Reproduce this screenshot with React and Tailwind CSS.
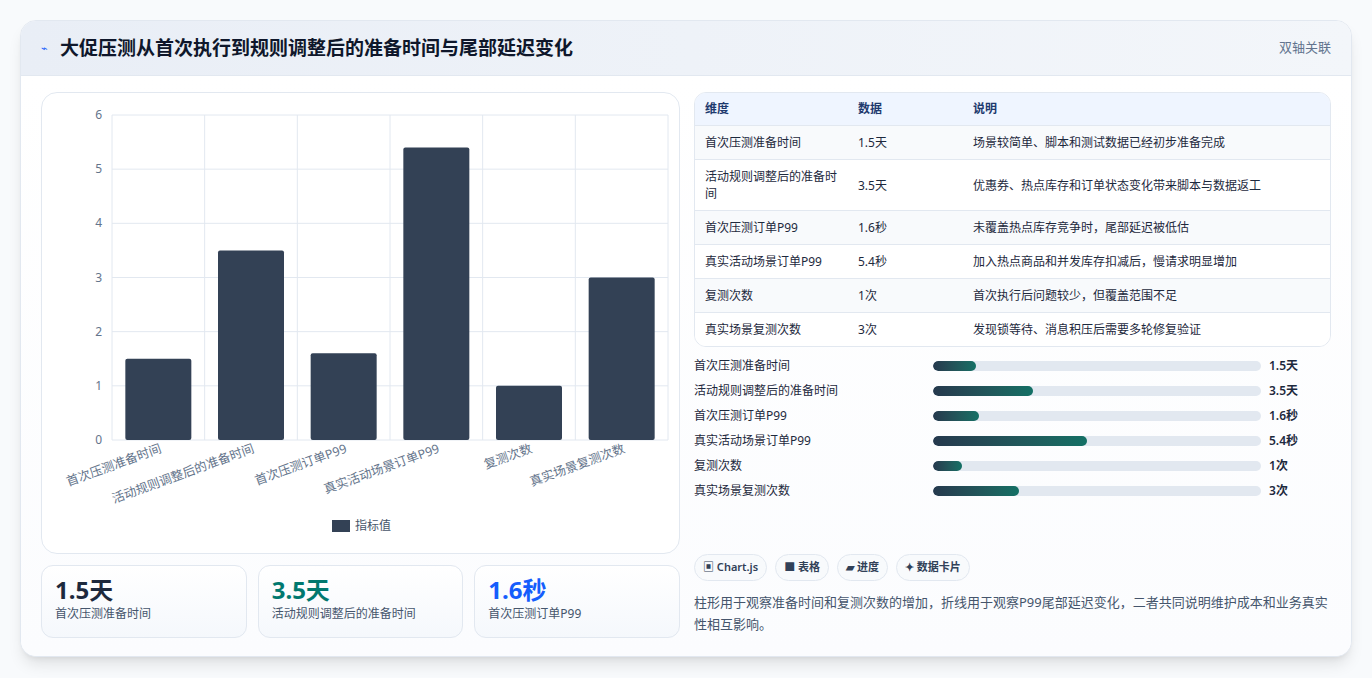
const DATA = [
  { name: '首次压测准备时间', v: 1.5, unit: '天', note: '场景较简单、脚本和测试数据已经初步准备完成' },
  { name: '活动规则调整后的准备时间', v: 3.5, unit: '天', note: '优惠券、热点库存和订单状态变化带来脚本与数据返工' },
  { name: '首次压测订单P99', v: 1.6, unit: '秒', note: '未覆盖热点库存竞争时，尾部延迟被低估' },
  { name: '真实活动场景订单P99', v: 5.4, unit: '秒', note: '加入热点商品和并发库存扣减后，慢请求明显增加' },
  { name: '复测次数', v: 1, unit: '次', note: '首次执行后问题较少，但覆盖范围不足' },
  { name: '真实场景复测次数', v: 3, unit: '次', note: '发现锁等待、消息积压后需要多轮修复验证' },
]

const FONT = { fontFamily: '"Noto Sans", "Noto Sans CJK SC", sans-serif' }

function BarChart() {
  const L = 70, R = 626, T = 22, B = 347
  const band = (R - L) / 6
  const y = (v) => B - (v / 6) * (B - T)
  return (
    <svg width="639" height="460" className="block">
      {[0, 1, 2, 3, 4, 5, 6].map((t) => (
        <g key={t}>
          <line x1={L} x2={R} y1={y(t)} y2={y(t)} stroke="#e2e8f0" />
          <text x={L - 10} y={y(t) + 4} textAnchor="end" fontSize="12" fill="#64748b">{t}</text>
        </g>
      ))}
      {[0, 1, 2, 3, 4, 5, 6].map((i) => (
        <line key={i} x1={L + band * i} x2={L + band * i} y1={T} y2={B} stroke="#e2e8f0" />
      ))}
      {DATA.map((d, i) => {
        const cx = L + band * i + band / 2
        return (
          <g key={d.name}>
            <rect x={cx - 33} y={y(d.v)} width="66" height={B - y(d.v)} rx="2" fill="#334155" />
            <text transform={`translate(${cx + 4},${B + 12}) rotate(-20)`} textAnchor="end" fontSize="12.5" fill="#64748b">{d.name}</text>
          </g>
        )
      })}
      <rect x="290" y="427" width="18" height="12" fill="#334155" />
      <text x="313" y="437" fontSize="12" fill="#475569">指标值</text>
    </svg>
  )
}

export default function App() {
  return (
    <div className="min-h-screen bg-[#f8fafc] p-5" style={FONT}>
      <div className="rounded-2xl border border-slate-200 bg-white shadow-lg overflow-hidden">
        <div className="flex items-center justify-between h-[55px] px-5 bg-gradient-to-r from-[#e9eef6] to-[#f3f6fa] border-b border-slate-200">
          <div className="flex items-center gap-3">
            <span className="text-[11px] text-blue-600">⌁</span>
            <h1 className="text-[19px] font-bold text-slate-900">大促压测从首次执行到规则调整后的准备时间与尾部延迟变化</h1>
          </div>
          <span className="text-[13px] text-slate-500">双轴关联</span>
        </div>
        <div className="flex gap-[14px] px-5 pt-4 pb-[18px] bg-gradient-to-b from-white to-[#fbfcfe]">
          <div className="w-[639px] flex flex-col gap-[11px]">
            <div className="rounded-2xl border border-slate-200 bg-white">
              <BarChart />
            </div>
            <div className="grid grid-cols-3 gap-[11px]">
              {[
                ['1.5天', 'text-slate-800', '首次压测准备时间'],
                ['3.5天', 'text-teal-700', '活动规则调整后的准备时间'],
                ['1.6秒', 'text-blue-600', '首次压测订单P99'],
              ].map(([v, c, l]) => (
                <div key={l} className="h-[73px] rounded-xl border border-slate-200 bg-gradient-to-b from-white to-[#f5f8fc] px-[13px] pt-[8px]">
                  <div className={`text-[24px] font-bold leading-8 ${c}`}>{v}</div>
                  <div className="text-[12px] text-slate-600 leading-4">{l}</div>
                </div>
              ))}
            </div>
          </div>
          <div className="flex-1 flex flex-col">
            <div className="rounded-xl border border-slate-200 overflow-hidden text-[12px] text-slate-800">
              <div className="flex h-[32px] items-center bg-[#eff5ff] text-[#1e3a6e] font-semibold px-[10px]">
                <div className="w-[153px]">维度</div>
                <div className="w-[115px]">数据</div>
                <div>说明</div>
              </div>
              {DATA.map((d, i) => (
                <div key={d.name} className={`flex items-center px-[10px] py-[8px] border-t border-slate-200 ${i % 2 ? 'bg-white' : 'bg-[#f8fafc]'}`}>
                  <div className="w-[153px] pr-3 leading-[17px]">{d.name}</div>
                  <div className="w-[115px] leading-[17px]">{d.v}{d.unit}</div>
                  <div className="leading-[17px]">{d.note}</div>
                </div>
              ))}
            </div>
            <div className="flex flex-col gap-[9px] mt-[11px]">
              {DATA.map((d) => (
                <div key={d.name} className="flex items-center h-4 text-[12px] text-slate-800">
                  <div className="w-[239px]">{d.name}</div>
                  <div className="w-[328px] h-[10px] rounded-full bg-slate-200 overflow-hidden">
                    <div className="h-full rounded-full bg-gradient-to-r from-[#25394d] to-[#137065]" style={{ width: `${(d.v / 11.5) * 100}%` }} />
                  </div>
                  <div className="ml-2 font-semibold">{d.v}{d.unit}</div>
                </div>
              ))}
            </div>
            <div className="flex gap-2 mt-[55px] text-[11px] font-semibold text-slate-700">
              {['▣ Chart.js', '■ 表格', '▰ 进度', '✦ 数据卡片'].map((c) => (
                <span key={c} className="rounded-full border border-slate-200 bg-[#f8fafc] px-2 h-[27px] flex items-center">{c}</span>
              ))}
            </div>
            <p className="mt-[10px] text-[13px] leading-[22px] text-slate-600">柱形用于观察准备时间和复测次数的增加，折线用于观察P99尾部延迟变化，二者共同说明维护成本和业务真实性相互影响。</p>
          </div>
        </div>
      </div>
    </div>
  )
}
